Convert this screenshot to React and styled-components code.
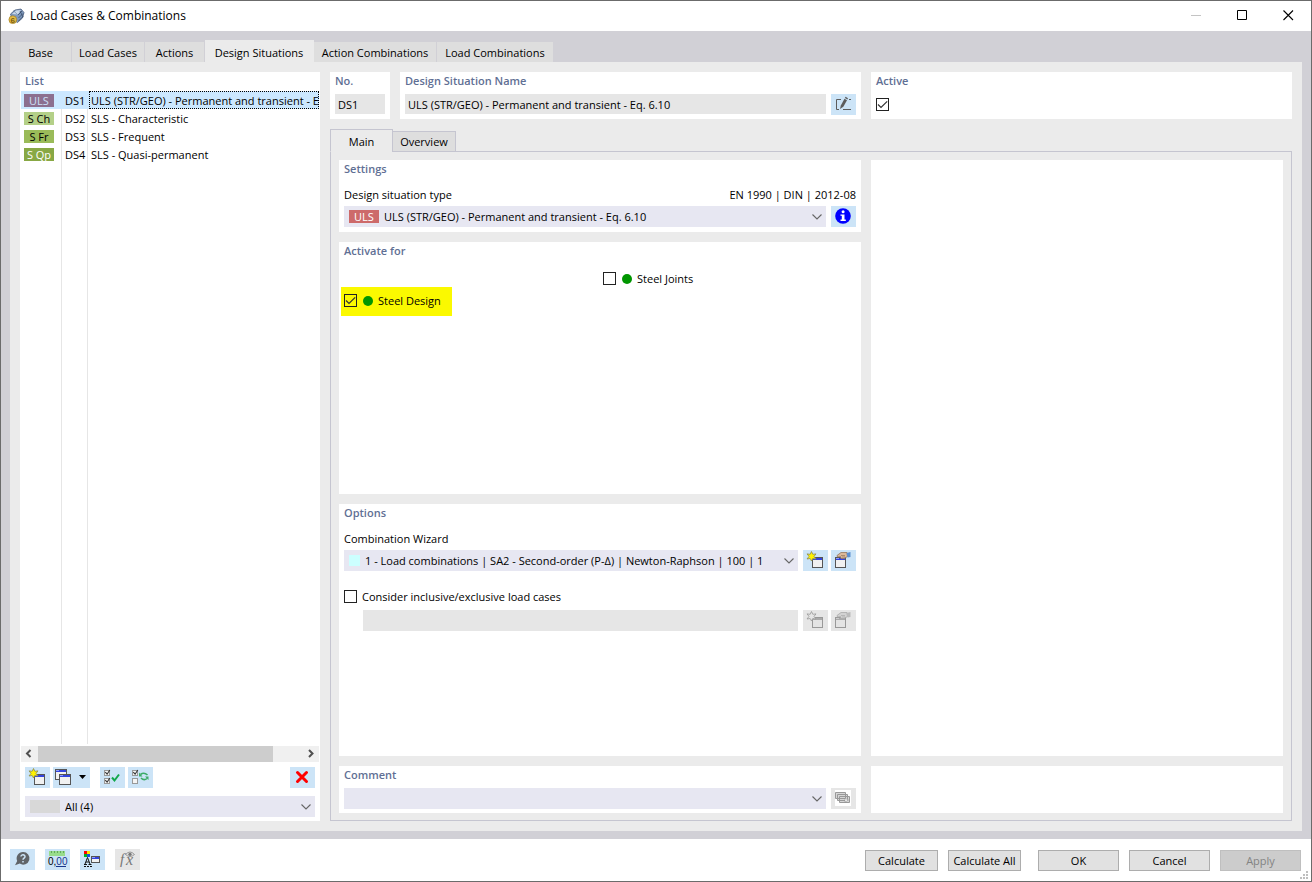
import React from "react"
import styled, { createGlobalStyle, css } from "styled-components"

const colors = {
    frame: "#6b6b6b",
    body: "#d1d0d6",
    panel: "#ebebeb",
    field: "#e6e6e6",
    combo: "#e7e7f2",
    line: "#c5c5d0",
    heading: "#5f6f94",
    blue: "#cce4f7",
}

const chevron = `url("data:image/svg+xml,%3Csvg xmlns='http://www.w3.org/2000/svg' width='10' height='6'%3E%3Cpath d='M.5 .5L5 5L9.5 .5' fill='none' stroke='%23666' stroke-width='1.1'/%3E%3C/svg%3E")`
const tick = `url("data:image/svg+xml,%3Csvg xmlns='http://www.w3.org/2000/svg' width='11' height='11'%3E%3Cpath d='M1 5.5L4 8.5L10.2 2.3' fill='none' stroke='%23333' stroke-width='1.2'/%3E%3C/svg%3E")`

const GlobalStyle = createGlobalStyle`
    * {
        box-sizing: border-box;
    }
    body {
        margin: 0;
        background: #ffffff;
        color: #000000;
    }
    body, button, input, select {
        font-family: "Open Sans", "Noto Sans", sans-serif;
        font-size: 11px;
    }
`

const Window = styled.div`
    display: flex;
    flex-direction: column;
    position: relative;
    min-height: 100vh;
    border: 1px solid ${colors.frame};
    background: #ffffff;
`

const TitleBar = styled.header`
    display: flex;
    align-items: center;
    height: 30px;
    padding-left: 7px;
`

const Title = styled.h1`
    flex: 1;
    margin: 0 0 0 5px;
    font-size: 12px;
    font-weight: 400;
    line-height: 16px;
`

const WindowButton = styled.button`
    width: 46px;
    height: 30px;
    padding: 0;
    border: 0;
    background: transparent;
`

const Body = styled.main`
    display: flex;
    flex-direction: column;
    flex: 1;
    padding: 9px 9px 8px;
    background: ${colors.body};
`

const Tabs = styled.nav`
    display: flex;
    align-items: flex-end;
    height: 22px;
`

const Tab = styled.button`
    width: ${props => props.$width}px;
    height: ${props => props.$active ? 22 : 20}px;
    padding: ${props => props.$active ? 2 : 0}px 0 0;
    border: 0;
    border-right: 1px solid ${props => props.$active ? colors.panel : colors.body};
    background: ${props => props.$active ? colors.panel : "#dedede"};
    white-space: nowrap;
`

const Content = styled.div`
    display: flex;
    flex: 1;
    gap: 10px;
    padding: 10px;
    background: ${colors.panel};
`

const ListPanel = styled.aside`
    display: flex;
    flex-direction: column;
    width: 300px;
    padding: 0 1px 4px;
    background: #ffffff;
`

const Heading = styled.h2`
    margin: 0 0 4px;
    font-size: 11px;
    font-weight: 600;
    line-height: 18px;
    color: ${colors.heading};
`

const ListHeading = styled(Heading)`
    margin: 0 0 1px 4px;
`

const ListArea = styled.div`
    flex: 1;
    margin-bottom: 2px;
    background:
        linear-gradient(#e6e6e6, #e6e6e6) 40px 0 / 1px 100% no-repeat,
        linear-gradient(#e6e6e6, #e6e6e6) 66px 0 / 1px 100% no-repeat;
`

const ListTable = styled.table`
    width: 100%;
    table-layout: fixed;
    border-collapse: collapse;
`

const ListRow = styled.tr`
    height: 18px;
    background: ${props => props.$selected ? "#cce8ff" : "transparent"};
`

const Cell = styled.td`
    width: ${props => props.$width};
    padding: ${props => props.$text ? 2 : 0}px 0 0 ${props => props.$indent}px;
    line-height: ${props => props.$text ? 16 : 18}px;
    white-space: nowrap;
    overflow: hidden;
    ${props => props.$focused && css`
        outline: 1px dotted #000000;
        outline-offset: -1px;
    `}
`

const Badge = styled.span`
    display: block;
    flex: none;
    width: 30px;
    height: 13px;
    line-height: 13px;
    text-align: center;
    color: ${props => props.$color || "#000000"};
    background: ${props => props.$fill};
`

const ScrollBar = styled.div`
    display: flex;
    height: 16px;
    background: #f0f0f0;
`

const ScrollArrow = styled.button`
    width: 17px;
    height: 16px;
    padding: 0;
    border: 0;
    background: transparent;
`

const ScrollTrack = styled.div`
    flex: 1;
`

const ScrollThumb = styled.div`
    width: 89%;
    height: 16px;
    background: #cdcdcd;
`

const Toolbar = styled.div`
    display: flex;
    gap: 3px;
    margin: 5px 4px 8px;
`

const Spacer = styled.span`
    flex: ${props => props.$size ? "none" : 1};
    width: ${props => props.$size || 0}px;
`

const IconButton = styled.button`
    display: block;
    flex: none;
    width: ${props => props.$wide ? 37 : 25}px;
    height: 21px;
    padding: 0;
    border: 0;
    background: ${props => props.disabled ? colors.field : colors.blue};

    svg {
        display: block;
    }
`

const Combo = styled.div`
    display: flex;
    flex: 1;
    align-items: center;
    gap: 5px;
    min-width: 0;
    height: 21px;
    padding-left: 5px;
    background: ${props => props.$disabled ? colors.field : colors.combo};
`

const FilterCombo = styled(Combo)`
    flex: none;
    margin: 0 4px;
`

const Swatch = styled.span`
    width: 11px;
    height: 11px;
    background: #ccffff;
`

const Select = styled.select`
    flex: 1;
    min-width: 0;
    height: 21px;
    padding: 0 18px 0 0;
    border: 0;
    appearance: none;
    color: #000000;
    background: ${props => props.disabled ? "none" : `${chevron} right 4px center no-repeat`};
`

const Details = styled.div`
    display: flex;
    flex: 1;
    flex-direction: column;
    min-width: 0;
`

const TopRow = styled.div`
    display: grid;
    grid-template-columns: 60px 461fr 421fr;
    gap: 10px;
    margin-bottom: 10px;
`

const Card = styled.section`
    display: ${props => props.$empty ? "block" : "flex"};
    flex-direction: column;
    flex: ${props => props.$grow ? 1 : "none"};
    min-height: 47px;
    padding: 0 5px ${props => props.$tight ? 4 : 5}px;
    background: #ffffff;
`

const TextField = styled.input`
    flex: 1;
    width: 100%;
    min-width: 0;
    height: 20px;
    padding: 0 3px;
    border: 0;
    background: ${colors.field};
`

const Fields = styled.div`
    display: flex;
    gap: 3px;
    padding-left: ${props => props.$indent || 0}px;

    > :first-child {
        margin-right: 2px;
    }
`

const Checkbox = styled.input`
    flex: none;
    width: 13px;
    height: 13px;
    margin: 0;
    appearance: none;
    border: 1px solid #222222;

    &:checked {
        background: ${tick} center no-repeat;
    }
`

const ActiveCheck = styled(Checkbox)`
    margin: 4px 0 0;
`

const InnerTabs = styled.nav`
    display: flex;
    align-items: flex-end;
    height: 23px;
    margin-bottom: -1px;
`

const InnerTab = styled.button`
    position: relative;
    width: ${props => props.$active ? 63 : 64}px;
    height: ${props => props.$active ? 23 : 21}px;
    margin-right: -1px;
    padding: ${props => props.$active ? 2 : 0}px 0 0;
    border: 1px solid ${colors.line};
    border-bottom-color: ${props => props.$active ? colors.panel : colors.line};
    background: ${props => props.$active ? colors.panel : "#dedede"};
`

const Sheet = styled.div`
    display: grid;
    flex: 1;
    grid-template-columns: 522fr 412fr;
    gap: 10px;
    padding: 8px 8px 7px;
    border: 1px solid ${colors.line};
`

const Column = styled.div`
    display: flex;
    flex-direction: column;
    gap: 10px;
    min-width: 0;
`

const LabelRow = styled.div`
    display: flex;
    justify-content: space-between;
    margin: 4px 0 2px;
    line-height: 18px;
`

const CheckLabel = styled.label`
    display: flex;
    align-items: center;
    gap: 5px;
    line-height: 17px;
`

const WideCheckLabel = styled(CheckLabel)`
    margin: 17px 0 5px;
`

const DesignGrid = styled.div`
    display: grid;
    grid-template-columns: 1fr 1fr;
    grid-template-rows: 17px 29px;
    column-gap: 6px;
    padding-top: 6px;
`

const Highlight = styled.div`
    display: flex;
    grid-column: 1;
    justify-self: start;
    margin-left: -3px;
    padding: 0 11px 2px 3px;
    background: #fbf900;
`

const SecondColumn = styled.div`
    grid-column: 2;
`

const Dot = styled.span`
    width: 10px;
    height: 10px;
    margin-left: 1px;
    border-radius: 50%;
    background: #009600;
`

const Footer = styled.footer`
    display: flex;
    align-items: flex-start;
    justify-content: space-between;
    height: 42px;
    padding: 10px 10px 0 9px;
`

const FooterTools = styled.div`
    display: flex;
    gap: 10px;
`

const FooterButtons = styled.div`
    display: flex;
    gap: 17px;
    padding-top: 1px;
`

const PushButton = styled.button`
    width: ${props => props.$narrow ? 73 : 81}px;
    height: 21px;
    padding: 0;
    border: 1px solid ${props => props.disabled ? "#bfbfbf" : "#adadad"};
    background: ${props => props.disabled ? "#cccccc" : "#e1e1e1"};
    color: ${props => props.disabled ? "#838383" : "#000000"};
    white-space: nowrap;
`

const Grip = styled.svg`
    position: absolute;
    right: 2px;
    bottom: 1px;
`

const Icon = ({ children, width = 25 }) => (
    <svg width={width} height="21" viewBox={`0 0 ${width} 21`} aria-hidden="true">{children}</svg>
)

const MiniWindow = ({ x, y, w = 10, h = 10, gray }) => (
    <g>
        <rect x={x + 0.5} y={y + 0.5} width={w} height={h} fill={gray ? "#e4e4e4" : "#f1f1f1"} stroke={gray ? "#999" : "#555"} />
        <rect x={x + 1} y={y + 1} width={w - 1} height="2" fill={gray ? "#aaa" : "#3344dd"} />
        <rect x={x + 1} y={y + 1} width="3" height="1" fill={gray ? "#ccc" : "#8c9cff"} />
    </g>
)

const NewIcon = ({ gray }) => (
    <Icon>
        <MiniWindow x={9} y={7} gray={gray} />
        <path
            d="M8.5 1.5L9.8 4.3L13 3.9L11 6.4L13 9L9.8 8.5L8.5 11L7.2 8.5L4 9L6 6.4L4 3.9L7.2 4.3Z"
            fill={gray ? "#e6e6e6" : "#fff200"}
            stroke={gray ? "#999" : "#8c8c50"}
            strokeWidth="0.8"
        />
    </Icon>
)

const EditIcon = ({ gray }) => (
    <Icon>
        <MiniWindow x={4} y={7} gray={gray} />
        <path
            d="M6 5.5L10 2.5L16 2.5L16.5 6.5L13 8.5L10 8.5L9.5 6.5L6.5 7Z"
            fill={gray ? "#d2d2d2" : "#dcb898"}
            stroke={gray ? "#aaa" : "#94765c"}
            strokeWidth="0.8"
        />
        <path d="M10 5.5h4M11 7h3" stroke={gray ? "#aaa" : "#94765c"} strokeWidth="0.7" />
        <path d="M15.5 3L19.5 2V7L16.5 7.5Z" fill={gray ? "#bbb" : "#5c8fd0"} />
    </Icon>
)

const CopyIcon = () => (
    <Icon width={37}>
        <MiniWindow x={2} y={2} w={11} />
        <MiniWindow x={6} y={7} w={11} />
        <path d="M26 8H33L29.5 12Z" fill="#000" />
    </Icon>
)

const ListBox = ({ y, checked }) => (
    <g fill="none">
        <rect x="4.5" y={y + 0.5} width="5" height="5" fill="#f4f4f4" stroke="#999" />
        {checked && <path d={`M5.3 ${y + 2.2}l1.8 2L9.8 ${y}`} stroke="#333" strokeWidth="1.1" />}
    </g>
)

const SelectAllIcon = () => (
    <Icon>
        <ListBox y={3} checked />
        <ListBox y={11} checked />
        <path d="M12 10.5L14.5 13.5L19 7.5" fill="none" stroke="#12a84c" strokeWidth="2" />
    </Icon>
)

const InvertIcon = () => (
    <Icon>
        <ListBox y={3} checked />
        <ListBox y={11} />
        <path d="M12.5 7.5Q16 4.8 19.5 8" fill="none" stroke="#3cab68" strokeWidth="1.6" />
        <path d="M19 11.5Q16 14 13 11" fill="none" stroke="#3cab68" strokeWidth="1.6" />
        <path d="M11 5.5V9.5H14.5ZM20.5 13V9.5H17Z" fill="#3cab68" />
    </Icon>
)

const DeleteIcon = () => (
    <Icon>
        <path d="M7.5 5.5L16.5 14.5M16.5 5.5L7.5 14.5" stroke="#ff0000" strokeWidth="3" strokeLinecap="round" />
    </Icon>
)

const PencilIcon = () => (
    <Icon>
        <path d="M10 5.5H5.5V15.5H8M18 5.5H20M12 15.5H20" fill="none" stroke="#5c5c5c" />
        <path d="M9 15L9.8 11.5L13.5 4.8L16 6.2L12.3 12.8Z" fill="#5c5c5c" />
        <path d="M13.9 4L14.6 2.8L17 4.2L16.4 5.4Z" fill="#5c5c5c" />
    </Icon>
)

const InfoIcon = () => (
    <Icon>
        <circle cx="12" cy="10" r="7.8" fill="#0000ff" />
        <circle cx="12.1" cy="5.8" r="1.5" fill="#fff" />
        <path d="M9.5 8.5H13.5V13.5H14.8V15H9.5V13.5H10.8V9.8H9.5Z" fill="#fff" />
    </Icon>
)

const CommentIcon = () => (
    <Icon>
        <path d="M4 2h16v16H4z" fill="#fff" />
        <path d="M4.5 4.5h10v6h-10zM6.5 6.5h10v6h-10zM8.5 8.5h10v6h-10z" fill="#d6d6d6" stroke="#999" />
        <path d="M14 10.5l3.5 1.5-3.5 2z" fill="#fff" stroke="#888" strokeWidth="0.5" />
    </Icon>
)

const HelpIcon = () => (
    <Icon>
        <path d="M13 3a6.3 6.3 0 1 1-3.2 11.6L5 16.2L7.2 12A6.3 6.3 0 0 1 13 3Z" fill="#606468" />
        <path d="M11 7.6C11 5.2 15.2 5.3 15 7.8C14.9 9.1 13 9.2 13 10.8M13 12v1.5" fill="none" stroke="#cce4f7" strokeWidth="1.5" />
    </Icon>
)

const DecimalsIcon = () => (
    <Icon>
        <path d="M4 2h16v5H4z" fill="#98dc8c" />
        <path d="M6.5 2v2M9.5 2v2M12.5 2v2M15.5 2v2M18.5 2v2" stroke="#63a95c" />
        <text x="3" y="16" fontSize="10" fontFamily="Liberation Sans, sans-serif">0,<tspan fill="#17358c">00</tspan></text>
        <path d="M11 17.5h10" stroke="#17358c" />
    </Icon>
)

const DisplayIcon = () => (
    <Icon>
        <path d="M4 2h3v3H4z" fill="#f00" />
        <path d="M7 2h3v3H7z" fill="#ffe500" />
        <path d="M4 5h3v3H4z" fill="#00b020" />
        <path d="M7 5h3v3H7z" fill="#1650e0" />
        <path d="M5 15L7.5 8.5L10 15M6 13h3M4 15.5h3M8.5 15.5h3" fill="none" stroke="#111" />
        <path d="M4 17.5h8" stroke="#111" strokeDasharray="2 1" />
        <MiniWindow x={11} y={7} w={8} h={6} />
    </Icon>
)

const FormulaIcon = () => (
    <Icon>
        <text x="5" y="15" fontSize="15" fontStyle="italic" fill="#777" fontFamily="Liberation Serif, serif">f</text>
        <text x="11" y="16" fontSize="16" fontStyle="italic" fill="#777" fontFamily="Liberation Serif, serif">x</text>
        <path d="M10.5 5.5Q15 .5 19.5 5.5Q15 9.5 10.5 5.5Z" fill="#ddd" stroke="#888" strokeWidth="0.8" />
        <circle cx="15" cy="5.3" r="1.6" fill="#777" />
    </Icon>
)

const AppIcon = () => (
    <svg width="17" height="17" viewBox="0 0 17 17" aria-hidden="true">
        <path d="M2.5 6L7 2L13 1L16 4.5L14.5 10L9.5 14.5L4 11Z" fill="#7f99bd" stroke="#3e5272" strokeWidth="0.7" />
        <path d="M4 6L8 2.5L13 2L10 6.5Z" fill="#c9d8ea" />
        <path d="M10 7L14 3M10.5 10L15 5.5M10.5 13L15 8.5M12 3L15 9" stroke="#31435f" strokeWidth="0.7" />
        <path d="M5.2 2.5L9.5 6.5" stroke="#5d779c" strokeWidth="0.6" />
        <circle cx="4.8" cy="11.7" r="3.9" fill="#e4bb45" stroke="#98761c" strokeWidth="0.6" />
        <text x="2.5" y="14.8" fontSize="8" fontWeight="700" fill="#7c5f12" fontFamily="Liberation Sans, sans-serif">6</text>
    </svg>
)

const tabs = [
    { label: "Base", width: 62 },
    { label: "Load Cases", width: 73 },
    { label: "Actions", width: 60 },
    { label: "Design Situations", width: 109, active: true },
    { label: "Action Combinations", width: 123 },
    { label: "Load Combinations", width: 117 },
]

const situations = [
    { badge: "ULS", fill: "#8c6f8f", color: "#cce0f8", no: "DS1", name: "ULS (STR/GEO) - Permanent and transient - Eq. 6.10", selected: true },
    { badge: "S Ch", fill: "#b4d088", no: "DS2", name: "SLS - Characteristic" },
    { badge: "S Fr", fill: "#9abb59", no: "DS3", name: "SLS - Frequent" },
    { badge: "S Qp", fill: "#88a844", color: "#ffffff", no: "DS4", name: "SLS - Quasi-permanent" },
]

const SituationList = () => (
    <ListPanel>
        <ListHeading>List</ListHeading>
        <ListArea>
            <ListTable>
                <tbody>
                    {situations.map(item => (
                        <ListRow key={item.no} $selected={item.selected}>
                            <Cell $width="40px" $indent={3}>
                                <Badge $fill={item.fill} $color={item.color}>{item.badge}</Badge>
                            </Cell>
                            <Cell $width="28px" $indent={4} $text>{item.no}</Cell>
                            <Cell $indent={2} $text $focused={item.selected}>{item.name}</Cell>
                        </ListRow>
                    ))}
                </tbody>
            </ListTable>
        </ListArea>
        <ScrollBar>
            <ScrollArrow aria-label="Scroll left">
                <svg width="17" height="16"><path d="M9.5 4L6 7.5L9.5 11" fill="none" stroke="#505050" strokeWidth="2" /></svg>
            </ScrollArrow>
            <ScrollTrack><ScrollThumb /></ScrollTrack>
            <ScrollArrow aria-label="Scroll right">
                <svg width="17" height="16"><path d="M7 4L10.5 7.5L7 11" fill="none" stroke="#505050" strokeWidth="2" /></svg>
            </ScrollArrow>
        </ScrollBar>
        <Toolbar>
            <IconButton aria-label="New"><NewIcon /></IconButton>
            <IconButton $wide aria-label="Copy"><CopyIcon /></IconButton>
            <Spacer $size={4} />
            <IconButton aria-label="Select all"><SelectAllIcon /></IconButton>
            <IconButton aria-label="Invert selection"><InvertIcon /></IconButton>
            <Spacer />
            <IconButton aria-label="Delete"><DeleteIcon /></IconButton>
        </Toolbar>
        <FilterCombo>
            <Badge $fill="#d8d8d8" />
            <Select aria-label="Filter"><option>All (4)</option></Select>
        </FilterCombo>
    </ListPanel>
)

const MainSheet = () => (
    <Sheet>
        <Column>
            <Card>
                <Heading>Settings</Heading>
                <LabelRow>
                    <label htmlFor="type">Design situation type</label>
                    <span>EN 1990 | DIN | 2012-08</span>
                </LabelRow>
                <Fields>
                    <Combo>
                        <Badge $fill="#cd6a6a" $color="#ffffff">ULS</Badge>
                        <Select id="type"><option>ULS (STR/GEO) - Permanent and transient - Eq. 6.10</option></Select>
                    </Combo>
                    <IconButton aria-label="Info"><InfoIcon /></IconButton>
                </Fields>
            </Card>
            <Card $grow>
                <Heading>Activate for</Heading>
                <DesignGrid>
                    <SecondColumn>
                        <CheckLabel><Checkbox type="checkbox" /><Dot />Steel Joints</CheckLabel>
                    </SecondColumn>
                    <Highlight>
                        <CheckLabel><Checkbox type="checkbox" defaultChecked /><Dot />Steel Design</CheckLabel>
                    </Highlight>
                </DesignGrid>
            </Card>
            <Card $grow>
                <Heading>Options</Heading>
                <LabelRow><label htmlFor="wizard">Combination Wizard</label></LabelRow>
                <Fields>
                    <Combo>
                        <Swatch />
                        <Select id="wizard"><option>1 - Load combinations | SA2 - Second-order (P-Δ) | Newton-Raphson | 100 | 1</option></Select>
                    </Combo>
                    <IconButton aria-label="New wizard"><NewIcon /></IconButton>
                    <IconButton aria-label="Edit wizard"><EditIcon /></IconButton>
                </Fields>
                <WideCheckLabel><Checkbox type="checkbox" />Consider inclusive/exclusive load cases</WideCheckLabel>
                <Fields $indent={19}>
                    <Combo $disabled><Select disabled aria-label="Load case relation" /></Combo>
                    <IconButton disabled aria-label="New relation"><NewIcon gray /></IconButton>
                    <IconButton disabled aria-label="Edit relation"><EditIcon gray /></IconButton>
                </Fields>
            </Card>
            <Card $tight>
                <Heading as="label" htmlFor="comment">Comment</Heading>
                <Fields>
                    <Combo><Select id="comment"><option></option></Select></Combo>
                    <IconButton disabled aria-label="Comment library"><CommentIcon /></IconButton>
                </Fields>
            </Card>
        </Column>
        <Column>
            <Card $grow $empty />
            <Card $empty />
        </Column>
    </Sheet>
)

const App = () => {
    return (
        <Window>
            <GlobalStyle />
            <TitleBar>
                <AppIcon />
                <Title>Load Cases &amp; Combinations</Title>
                <WindowButton aria-label="Minimize" disabled>
                    <svg width="11" height="11"><path d="M0 5.5h10" stroke="#c4c4c4" /></svg>
                </WindowButton>
                <WindowButton aria-label="Maximize">
                    <svg width="11" height="11"><path d="M.5 .5h9v9h-9z" fill="none" stroke="#000" /></svg>
                </WindowButton>
                <WindowButton aria-label="Close">
                    <svg width="11" height="11"><path d="M.5 .5l9.5 9.5M10 .5l-9.5 9.5" stroke="#000" strokeWidth="1.1" /></svg>
                </WindowButton>
            </TitleBar>
            <Body>
                <Tabs>
                    {tabs.map(tab => (
                        <Tab key={tab.label} $width={tab.width} $active={tab.active}>{tab.label}</Tab>
                    ))}
                </Tabs>
                <Content>
                    <SituationList />
                    <Details>
                        <TopRow>
                            <Card>
                                <Heading as="label" htmlFor="no">No.</Heading>
                                <TextField id="no" defaultValue="DS1" readOnly />
                            </Card>
                            <Card $tight>
                                <Heading as="label" htmlFor="name">Design Situation Name</Heading>
                                <Fields>
                                    <TextField id="name" defaultValue="ULS (STR/GEO) - Permanent and transient - Eq. 6.10" readOnly />
                                    <IconButton aria-label="Edit name"><PencilIcon /></IconButton>
                                </Fields>
                            </Card>
                            <Card>
                                <Heading as="label" htmlFor="active">Active</Heading>
                                <ActiveCheck id="active" type="checkbox" defaultChecked />
                            </Card>
                        </TopRow>
                        <InnerTabs>
                            <InnerTab $active>Main</InnerTab>
                            <InnerTab>Overview</InnerTab>
                        </InnerTabs>
                        <MainSheet />
                    </Details>
                </Content>
            </Body>
            <Footer>
                <FooterTools>
                    <IconButton aria-label="Help"><HelpIcon /></IconButton>
                    <IconButton aria-label="Units and decimal places"><DecimalsIcon /></IconButton>
                    <IconButton aria-label="Display properties"><DisplayIcon /></IconButton>
                    <IconButton disabled aria-label="Formula"><FormulaIcon /></IconButton>
                </FooterTools>
                <FooterButtons>
                    <FooterTools>
                        <PushButton $narrow>Calculate</PushButton>
                        <PushButton $narrow>Calculate All</PushButton>
                    </FooterTools>
                    <FooterTools>
                        <PushButton>OK</PushButton>
                        <PushButton>Cancel</PushButton>
                        <PushButton disabled>Apply</PushButton>
                    </FooterTools>
                </FooterButtons>
            </Footer>
            <Grip width="9" height="9" aria-hidden="true">
                <path d="M6 0h2v2H6zM3 3h2v2H3zM6 3h2v2H6zM0 6h2v2H0zM3 6h2v2H3zM6 6h2v2H6z" fill="#bfbfbf" />
            </Grip>
        </Window>
    )
}

export default App
